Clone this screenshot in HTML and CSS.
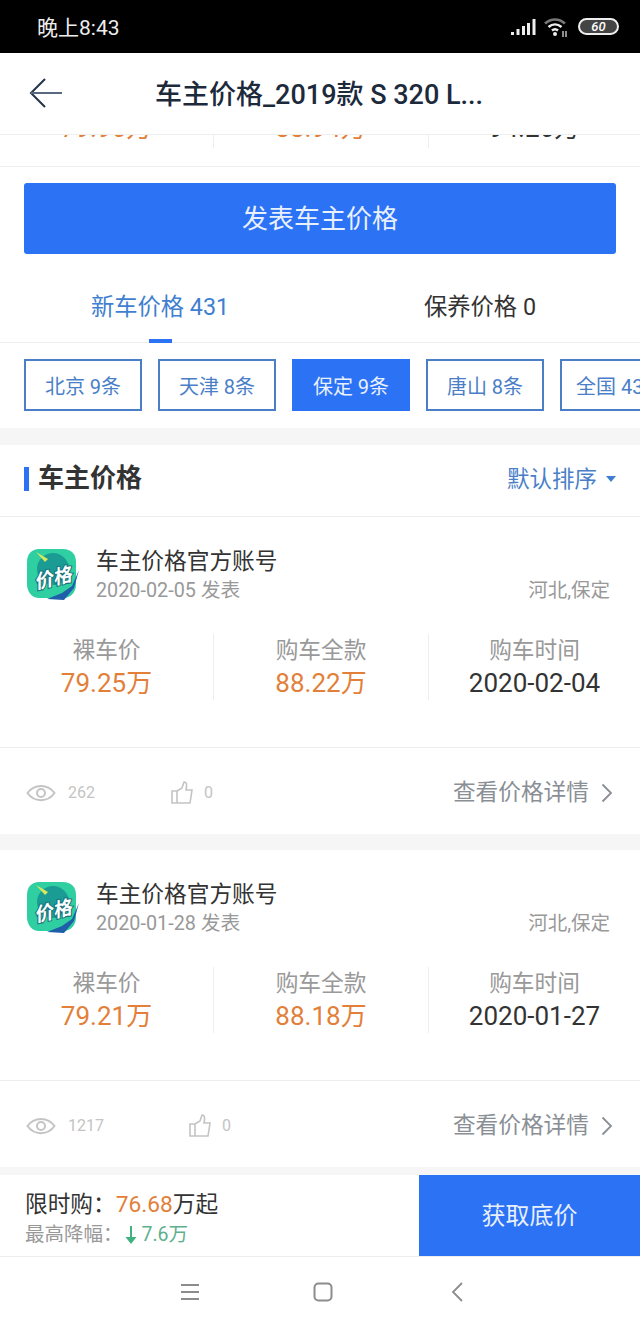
FILE: index.html
```html
<!DOCTYPE html>
<html lang="zh-CN">
<head>
  <meta charset="UTF-8">
  <title>车主价格</title>
  <link rel="stylesheet" href="styles.css">
</head>
<body>
<div class="page">

  <div class="status-bar">
    <span class="clock">晚上8:43</span>
    <div class="status-icons">
      <svg width="26" height="18" viewBox="0 0 26 18"><path d="M1 14h3v3H1zM6.500 11h3v6h-3zM12 8h3v9h-3zM17 5h3v12h-3zM22.500 1h3v16h-3z" fill="#eee"/></svg>
      <svg width="26" height="22" viewBox="0 0 26 22" fill="none"><path d="M2 7.500C8 2 16 2 22 7.500" stroke="#777" stroke-width="2.500"/><path d="M5.500 11C9.500 7.500 14.500 7.500 18.500 11" stroke="#eee" stroke-width="2.500"/><path d="M9 14.500c2-1.700 4-1.700 6 0" stroke="#eee" stroke-width="2.500"/><circle cx="12" cy="18" r="2" fill="#eee"/><path d="M20 15v6M23 15v6" stroke="#bbb" stroke-width="1.500"/></svg>
      <div class="battery"><span class="battery-num">60</span></div>
    </div>
  </div>

  <div class="title-bar">
    <svg class="back-icon" width="36" height="32" viewBox="0 0 36 32" fill="none"><path d="M18 2 4 16l14 14" stroke="#24344a" stroke-width="2"/><path d="M4 16h31" stroke="#5a6a7e" stroke-width="2"/></svg>
    <div class="title">车主价格_2019款 S 320 L...</div>
  </div>

  <div class="content">
    <div class="clipped-row">
      <div class="stats stats-clipped">
        <div class="stat"><div class="stat-value orange">79.96万</div></div>
        <div class="stat"><div class="stat-value orange">88.94万</div></div>
        <div class="stat"><div class="stat-value">94.26万</div></div>
      </div>
    </div>

    <div class="publish-wrap">
      <div class="publish-btn">发表车主价格</div>
    </div>

    <div class="tabs">
      <div class="tab tab-active">新车价格 431<span class="tab-line"></span></div>
      <div class="tab">保养价格 0</div>
    </div>

    <div class="chips">
      <div class="chip">北京 9条</div>
      <div class="chip">天津 8条</div>
      <div class="chip chip-active">保定 9条</div>
      <div class="chip">唐山 8条</div>
      <div class="chip">全国 431条</div>
    </div>

    <div class="section-head">
      <h2 class="section-title">车主价格</h2>
      <div class="sort">默认排序<span class="sort-arrow"></span></div>
    </div>

    <div class="card">
      <div class="card-top">
        <svg class="avatar" width="54" height="54" viewBox="0 0 54 54">
          <path d="M13 1h24c8 0 13 5 13 13v22c0 8-5 14-13 14H13C6 50 1 44 1 36V14C1 6 6 1 13 1Z" fill="#2fcfa2"/>
          <circle cx="27" cy="21" r="16" fill="#1a9c94"/>
          <path d="M10 4l9 10 3-3z" fill="#d8e85a"/>
          <path d="M53 22 48 40 38 52 21 51l15-6 10-7z" fill="#1f5ea8"/>
          <text class="avatar-text" x="7" y="37" transform="rotate(-14 26 28)">价格</text>
        </svg>
        <div class="user">
          <div class="user-name">车主价格官方账号</div>
          <div class="user-date">2020-02-05 发表</div>
        </div>
        <div class="user-loc">河北,保定</div>
      </div>
      <div class="stats">
        <div class="stat"><div class="stat-label">裸车价</div><div class="stat-value orange">79.25万</div></div>
        <div class="stat"><div class="stat-label">购车全款</div><div class="stat-value orange">88.22万</div></div>
        <div class="stat"><div class="stat-label">购车时间</div><div class="stat-value">2020-02-04</div></div>
      </div>
      <div class="card-foot">
        <svg class="eye" width="30" height="24" viewBox="0 0 30 24" fill="none"><path d="M1.500 12C8 2.500 22 2.500 28.500 12 22 21.500 8 21.500 1.500 12Z" stroke="#c4c4c4" stroke-width="2"/><circle cx="15" cy="12" r="4" stroke="#c4c4c4" stroke-width="2"/></svg>
        <span class="count count-views">262</span>
        <svg class="thumb" width="24" height="24" viewBox="0 0 24 24" fill="none"><path d="M2 10h5v12H2zM7 10l5-3 2-6c3 0 3 3 2 8h6l-2 13H7" stroke="#c4c4c4" stroke-width="1.600"/></svg>
        <span class="count">0</span>
        <span class="detail">查看价格详情<svg class="chevron" width="12" height="20" viewBox="0 0 12 20" fill="none"><path d="M1.500 1.500 10 10l-8.500 8.500" stroke="#8a8f96" stroke-width="1.800"/></svg></span>
      </div>
    </div>

    <div class="card">
      <div class="card-top">
        <svg class="avatar" width="54" height="54" viewBox="0 0 54 54">
          <path d="M13 1h24c8 0 13 5 13 13v22c0 8-5 14-13 14H13C6 50 1 44 1 36V14C1 6 6 1 13 1Z" fill="#2fcfa2"/>
          <circle cx="27" cy="21" r="16" fill="#1a9c94"/>
          <path d="M10 4l9 10 3-3z" fill="#d8e85a"/>
          <path d="M53 22 48 40 38 52 21 51l15-6 10-7z" fill="#1f5ea8"/>
          <text class="avatar-text" x="7" y="37" transform="rotate(-14 26 28)">价格</text>
        </svg>
        <div class="user">
          <div class="user-name">车主价格官方账号</div>
          <div class="user-date">2020-01-28 发表</div>
        </div>
        <div class="user-loc">河北,保定</div>
      </div>
      <div class="stats">
        <div class="stat"><div class="stat-label">裸车价</div><div class="stat-value orange">79.21万</div></div>
        <div class="stat"><div class="stat-label">购车全款</div><div class="stat-value orange">88.18万</div></div>
        <div class="stat"><div class="stat-label">购车时间</div><div class="stat-value">2020-01-27</div></div>
      </div>
      <div class="card-foot">
        <svg class="eye" width="30" height="24" viewBox="0 0 30 24" fill="none"><path d="M1.500 12C8 2.500 22 2.500 28.500 12 22 21.500 8 21.500 1.500 12Z" stroke="#c4c4c4" stroke-width="2"/><circle cx="15" cy="12" r="4" stroke="#c4c4c4" stroke-width="2"/></svg>
        <span class="count count-views count-wide">1217</span>
        <svg class="thumb" width="24" height="24" viewBox="0 0 24 24" fill="none"><path d="M2 10h5v12H2zM7 10l5-3 2-6c3 0 3 3 2 8h6l-2 13H7" stroke="#c4c4c4" stroke-width="1.600"/></svg>
        <span class="count">0</span>
        <span class="detail">查看价格详情<svg class="chevron" width="12" height="20" viewBox="0 0 12 20" fill="none"><path d="M1.500 1.500 10 10l-8.500 8.500" stroke="#8a8f96" stroke-width="1.800"/></svg></span>
      </div>
    </div>
  </div>

  <div class="buy-bar">
    <div class="buy-info">
      <div class="buy-line">限时购：<span class="orange">76.68</span>万起</div>
      <div class="drop-line">最高降幅：<svg class="drop-arrow" width="12" height="20" viewBox="0 0 12 20"><path d="M5 1h2v11h4.500L6 19 .5 12H5z" fill="#3fb27f"/></svg><span class="drop-num">7.6万</span></div>
    </div>
    <div class="buy-btn">获取底价</div>
  </div>

  <div class="nav-bar">
    <svg width="20" height="18" viewBox="0 0 20 18" fill="none"><path d="M1 2h18M1 9h18M1 16h18" stroke="#8c8c8c" stroke-width="2"/></svg>
    <svg width="20" height="20" viewBox="0 0 20 20" fill="none"><rect x="1.500" y="1.500" width="17" height="17" rx="4" stroke="#8c8c8c" stroke-width="2"/></svg>
    <svg class="nav-back" width="12" height="20" viewBox="0 0 12 20" fill="none"><path d="M11 1 2 10l9 9" stroke="#8c8c8c" stroke-width="1.800"/></svg>
  </div>

</div>
</body>
</html>
```

FILE: styles.css
```css
* { box-sizing: border-box; }
html, body { margin: 0; padding: 0; }
body {
  font-family: Roboto, "Noto Sans CJK SC", sans-serif;
  background: #fff;
  color: #333;
}
.page {
  width: 640px;
  height: 1333px;
  display: flex;
  flex-direction: column;
  overflow: hidden;
}

.status-bar {
  height: 53px;
  flex: none;
  background: #000;
  display: flex;
  align-items: center;
  justify-content: space-between;
  padding: 0 21px 0 37px;
}
.clock { color: #eee; font-size: 21px; margin-bottom: 2px; }
.status-icons { display: flex; align-items: center; gap: 9px; }
.status-icons svg:first-child { margin-right: -2px; }
.battery {
  width: 41px;
  height: 17px;
  border: 2px solid #eee;
  border-radius: 9px;
  background: #444;
  display: flex;
  align-items: center;
  justify-content: center;
}
.battery-num { color: #fff; font-size: 13px; font-weight: 500; font-style: italic; line-height: 1; }

.title-bar {
  height: 82px;
  flex: none;
  background: #fff;
  border-bottom: 1px solid #eee;
  display: flex;
  align-items: center;
  padding: 0 0 2px 27px;
}
.back-icon { flex: none; }
.title {
  margin-left: 92px;
  font-size: 27px;
  font-weight: 500;
  color: #1c2a3c;
  white-space: nowrap;
}

.content { flex: 1; min-height: 0; overflow: hidden; background: #f6f6f6; }

.clipped-row {
  height: 32px;
  background: #fff;
  overflow: hidden;
  border-bottom: 1px solid #eee;
}
.stats {
  display: flex;
  height: 66px;
  background: #fff;
}
.stats-clipped { margin-top: -23px; height: 36px; }
.stat {
  flex: none;
  width: 214px;
  text-align: center;
  border-right: 1px solid #eee;
}
.stat:nth-child(2) { width: 215px; }
.stat:last-child { width: 211px; border-right: 0; }
.stat-label { font-size: 22.700px; line-height: 33px; color: #999; }
.stat-value { font-size: 26px; line-height: 33px; color: #333; }
.stat-value.orange, .buy-line .orange { color: #e2803a; }

.publish-wrap { background: #fff; padding: 16px 24px 0; }
.publish-btn {
  height: 71px;
  background: #2b72f5;
  border-radius: 3px;
  color: #e8f0fe;
  font-size: 26px;
  padding-bottom: 4px;
  display: flex;
  align-items: center;
  justify-content: center;
}

.tabs {
  height: 89px;
  background: #fff;
  display: flex;
  border-bottom: 1px solid #eee;
}
.tab {
  position: relative;
  width: 320px;
  text-align: center;
  font-size: 23.300px;
  line-height: 106px;
  color: #333;
}
.tab-active { color: #3f7fd0; }
.tab-line {
  position: absolute;
  left: 149px;
  bottom: -1px;
  width: 23px;
  height: 4px;
  background: #2b72f5;
}

.chips {
  display: flex;
  gap: 16px;
  background: #fff;
  padding: 16px 0 17px 24px;
  overflow: hidden;
}
.chip {
  flex: none;
  width: 118px;
  height: 52px;
  border: 2px solid #4a7fc8;
  color: #4a7fc8;
  font-size: 20px;
  display: flex;
  align-items: center;
  justify-content: center;
  white-space: nowrap;
}
.chip:last-child { justify-content: flex-start; padding-left: 14px; }
.chip-active { background: #2b72f5; border-color: #2b72f5; color: #e8f0fe; }

.section-head {
  height: 72px;
  margin-top: 17px;
  background: #fff;
  border-bottom: 1px solid #eee;
  display: flex;
  align-items: center;
  justify-content: space-between;
  padding: 0 24px 3px;
}
.section-title {
  margin: 0;
  font-size: 26px;
  font-weight: 700;
  color: #333;
  border-left: 5px solid #2b72f5;
  padding-left: 9px;
  height: 24px;
  line-height: 22px;
}
.sort {
  color: #4a7fc8;
  font-size: 22.500px;
  line-height: 30px;
  display: flex;
  align-items: center;
}
.sort-arrow {
  margin-left: 9px;
  border-left: 5px solid transparent;
  border-right: 5px solid transparent;
  border-top: 6px solid #3f7fd0;
}

.card { background: #fff; margin-bottom: 16px; }
.card-top {
  height: 117px;
  display: flex;
  align-items: flex-start;
  padding: 31px 30px 0 26px;
}
.avatar { flex: none; }
.avatar-text {
  font-size: 19px;
  font-weight: 700;
  font-style: italic;
  fill: #fff;
  stroke: #17727c;
  stroke-width: 2px;
  paint-order: stroke;
}
.user { margin-left: 16px; }
.user-name { font-size: 22.700px; line-height: 28px; color: #333; }
.user-date { font-size: 19.800px; line-height: 30px; color: #999; }
.user-loc { margin-left: auto; margin-top: 28px; font-size: 19.500px; line-height: 30px; color: #999; }
.card .stats { height: 114px; border-bottom: 1px solid #eee; }
.card .stat { height: 66px; }
.card-foot {
  height: 86px;
  display: flex;
  align-items: center;
  padding: 3px 30px 0 26px;
}
.eye { flex: none; }
.thumb { flex: none; }
.count { font-size: 16px; color: #c4c4c4; margin-left: 10px; }
.count-views { width: 102px; margin-left: 12px; }
.count-wide { width: 120px; }
.detail {
  margin-left: auto;
  display: flex;
  align-items: center;
  gap: 12px;
  font-size: 22.700px;
  line-height: 30px;
  color: #8a8f96;
}
.chevron { flex: none; margin-right: -3px; }

.buy-bar {
  height: 82px;
  flex: none;
  background: #fff;
  border-bottom: 1px solid #eee;
  display: flex;
  justify-content: space-between;
}
.buy-info { padding: 14px 0 0 25px; }
.buy-line { font-size: 22.700px; line-height: 32px; color: #333; }
.drop-line { font-size: 19.500px; line-height: 27px; color: #999; display: flex; align-items: center; }
.drop-arrow { flex: none; margin: 0 5px 0 2px; }
.drop-num { color: #5eb08c; }
.buy-btn {
  width: 221px;
  background: #2b72f5;
  color: #e8f0fe;
  font-size: 24px;
  padding-bottom: 5px;
  display: flex;
  align-items: center;
  justify-content: center;
}

.nav-bar {
  height: 76px;
  flex: none;
  background: #fff;
  display: flex;
  align-items: center;
  gap: 113px;
  padding: 0 0 6px 180px;
}
.nav-back { margin-left: 5px; }
```
